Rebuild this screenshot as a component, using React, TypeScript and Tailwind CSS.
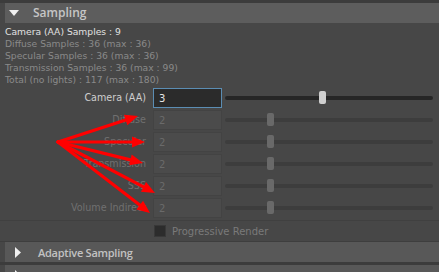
import React from 'react';

type Row = { label: string; value: string; enabled: boolean; pos: number };

const rows: Row[] = [
  { label: 'Camera (AA)', value: '3', enabled: true, pos: 45 },
  { label: 'Diffuse', value: '2', enabled: false, pos: 20 },
  { label: 'Specular', value: '2', enabled: false, pos: 20 },
  { label: 'Transmission', value: '2', enabled: false, pos: 20 },
  { label: 'SSS', value: '2', enabled: false, pos: 20 },
  { label: 'Volume Indirect', value: '2', enabled: false, pos: 20 },
];

const arrowTips: [number, number][] = [
  [138, 116],
  [145, 142],
  [143, 163],
  [155, 193],
  [150, 213],
];

function Arrows() {
  const ox = 58;
  const oy = 142;
  return (
    <svg className="absolute inset-0 pointer-events-none" width={439} height={272}>
      {arrowTips.map(([tx, ty], i) => {
        const dx = tx - ox;
        const dy = ty - oy;
        const len = Math.sqrt(dx * dx + dy * dy);
        const ux = dx / len;
        const uy = dy / len;
        const bx = tx - ux * 13;
        const by = ty - uy * 13;
        const px = -uy * 5.5;
        const py = ux * 5.5;
        return (
          <g key={i}>
            <line x1={ox} y1={oy} x2={bx} y2={by} stroke="#ff0000" strokeWidth={3.2} strokeLinecap="round" />
            <polygon points={`${tx},${ty} ${bx + px},${by + py} ${bx - px},${by - py}`} fill="#ff0000" />
          </g>
        );
      })}
    </svg>
  );
}

function Slider({ pos, enabled }: { pos: number; enabled: boolean }) {
  return (
    <div className="relative flex-1 h-[20px] flex items-center mr-[6px]">
      <div className={`w-full h-[4px] rounded-full ${enabled ? 'bg-[#262626]' : 'bg-[#3d3d3d]'}`} />
      <div
        className={`absolute top-[3px] w-[7px] h-[13px] rounded-[2px] ${enabled ? 'bg-[#cfcfcf]' : 'bg-[#696969]'}`}
        style={{ left: `${pos}%` }}
      />
    </div>
  );
}

// headers use a heavier, slightly narrower face than the body text
const headerFont = { fontFamily: '"Open Sans", "DejaVu Sans", sans-serif' };

function CollapsedHeader({ title }: { title: string }) {
  return (
    <div className="ml-[5px] h-[20px] bg-[#585858] flex items-center">
      <svg width="7" height="11" className="ml-[10px]" viewBox="0 0 7 11">
        <polygon points="0,0 6,5.5 0,11" fill="#f0f0f0" />
      </svg>
      <span
        className="ml-[16px] font-semibold text-[11px] tracking-[-0.25px] text-[#c2c2c2] leading-none"
        style={headerFont}
      >
        {title}
      </span>
    </div>
  );
}

export default function App() {
  return (
    <div
      className="relative w-[439px] h-[272px] overflow-hidden bg-[#474747] text-[9.5px]"
      style={{ fontFamily: '"DejaVu Sans", "Open Sans", sans-serif' }}
    >
      <div className="h-[3px] bg-[#3c3c3c]" />
      <div className="ml-[5px] h-[20px] bg-[#5d5d5d] flex items-center">
        <svg width="10" height="7" className="ml-[4px]" viewBox="0 0 10 7">
          <polygon points="0,0 10,0 5,6" fill="#f0f0f0" />
        </svg>
        <span className="ml-[14px] font-semibold text-[12px] text-[#c6c6c6] leading-none" style={headerFont}>
          Sampling
        </span>
      </div>

      <div className="pl-[5px] pt-[3px] text-[9.2px] leading-[12px]">
        <div className="text-[#e2e2e2]">Camera (AA) Samples : 9</div>
        <div className="text-[#8a8a8a]">Diffuse Samples : 36 (max : 36)</div>
        <div className="text-[#8a8a8a]">Specular Samples : 36 (max : 36)</div>
        <div className="text-[#8a8a8a]">Transmission Samples : 36 (max : 99)</div>
        <div className="text-[#8a8a8a]">Total (no lights) : 117 (max : 180)</div>
      </div>

      <div className="mt-[2px] flex flex-col gap-[2px]">
        {rows.map((r) => (
          <div key={r.label} className="flex items-center h-[20px]">
            <div
              className={`w-[146px] text-right whitespace-nowrap text-[9.6px] ${r.enabled ? 'text-[#cecece]' : 'text-[#707070]'}`}
            >
              {r.label}
            </div>
            <div
              className={`ml-[7px] w-[69px] h-[20px] flex items-center pl-[5px] text-[10px] ${
                r.enabled
                  ? 'bg-[#2b2b2b] border border-[#5b8db3] text-[#e6e6e6]'
                  : 'bg-[#4b4b4b] border border-[#434343] text-[#6a6a6a]'
              }`}
            >
              {r.value}
            </div>
            <div className="w-[3px]" />
            <Slider pos={r.pos} enabled={r.enabled} />
          </div>
        ))}
      </div>

      <div className="mt-[2px] border-t border-[#404040] h-[21px] flex items-center">
        <div className="ml-[154px] w-[12px] h-[12px] bg-[#2c2c2c] border border-[#383838]" />
        <span className="ml-[6px] text-[#7a7a7a] text-[10px]">Progressive Render</span>
      </div>

      <div className="border-t border-[#3e3e3e]" />
      <CollapsedHeader title="Adaptive Sampling" />
      <div className="h-[3px] bg-[#3c3c3c]" />
      <CollapsedHeader title="Clamping" />

      <Arrows />
    </div>
  );
}
